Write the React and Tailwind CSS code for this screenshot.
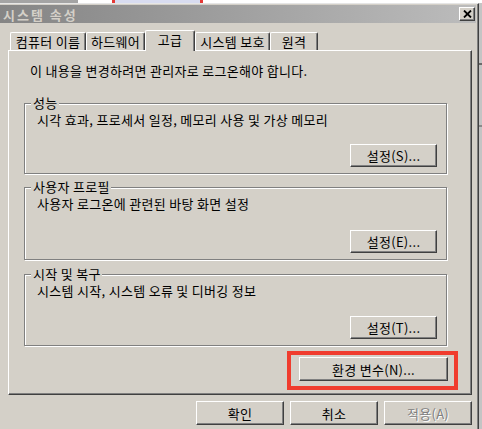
const font = { fontFamily: '"Noto Sans CJK KR", "Liberation Sans", sans-serif' };

const raised =
  "border border-t-white border-l-white border-r-[#404040] border-b-[#404040] shadow-[inset_-1px_-1px_0_#808080] bg-[#d4d0c8]";

function Btn({ label, className, disabled }) {
  return (
    <button
      className={`${raised} flex items-center justify-center text-[13px] leading-none tracking-[0.3px] ${
        disabled ? "text-[#808080] [text-shadow:1px_1px_0_#ffffff]" : "text-black"
      } ${className}`}
    >
      {label}
    </button>
  );
}

function Group({ title, desc, btnLabel, className }) {
  return (
    <div
      className={`relative w-[423px] flex flex-col border border-[#808080] shadow-[inset_1px_1px_0_#ffffff,1px_1px_0_#ffffff] pl-[12px] pr-[9px] pt-[8px] pb-[6px] ${className}`}
    >
      <span className="absolute -top-[9px] left-[6px] bg-[#d4d0c8] pl-[2px] pr-[1px] leading-[16px] text-[13px]">
        {title}
      </span>
      <div className="leading-[16px] text-[13px]">{desc}</div>
      <div className="mt-auto flex justify-end">
        <Btn label={btnLabel} className="w-[87px] h-[23px]" />
      </div>
    </div>
  );
}

function Tab({ label, width, active }) {
  if (active) {
    return (
      <div
        className={`${width} h-[21px] rounded-t-[2px] border-t border-l border-t-white border-l-white border-r border-r-[#404040] shadow-[inset_-1px_0_0_#808080] bg-[#d4d0c8] flex justify-center pt-[1px] text-[13px] leading-[16px]`}
      >
        {label}
      </div>
    );
  }
  return (
    <div
      className={`${width} h-[18px] mb-[1px] rounded-t-[2px] border-t border-l border-t-white border-l-white border-r border-r-[#404040] shadow-[inset_-1px_0_0_#808080] bg-[#d4d0c8] flex justify-center pt-[1px] text-[13px] leading-[16px]`}
    >
      {label}
    </div>
  );
}

export default function App() {
  return (
    <div className="w-[482px] h-[429px] overflow-hidden bg-[#d4d0c8] flex flex-col text-black tracking-[0.3px]" style={font}>
      {/* strip of the window behind */}
      <div className="h-[3px] flex shrink-0">
        <div className="w-[78px] bg-[#a4a4a4]" />
        <div className="w-[34px] bg-white" />
        <div className="w-[3px] bg-[#e53935]" />
        <div className="w-[85px] bg-[#d8dcf0]" />
        <div className="w-[3px] bg-[#e53935]" />
        <div className="flex-1 bg-white" />
      </div>

      <div className="flex flex-1">
        {/* dialog */}
        <div className="w-[479px] flex flex-col border-r border-r-[#404040] shadow-[inset_-1px_0_0_#808080] border-t border-t-[#e6e6e6] pt-[1px]">
          <div className="h-[18px] mr-[2px] flex items-center justify-between pl-[3px] pr-[1px] bg-gradient-to-r from-[#858585] to-[#bcbcbc]">
            <span className="text-[13px] font-bold text-[#d4d0c8] leading-none tracking-[2px]">시스템 속성</span>
            <button className={`${raised} w-[16px] h-[14px] flex items-center justify-center`}>
              <svg width="9" height="8" viewBox="0 0 9 8">
                <path d="M1 0.5 L8 7.5 M8 0.5 L1 7.5" stroke="#000" strokeWidth="1.8" />
              </svg>
            </button>
          </div>

          {/* tabs */}
          <div className="mt-[7px] ml-[10px] h-[21px] -mb-[1px] flex items-end relative z-10">
            <Tab label="컴퓨터 이름" width="w-[76px]" />
            <Tab label="하드웨어" width="w-[59px]" />
            <Tab label="고급" width="w-[50px]" active />
            <Tab label="시스템 보호" width="w-[75px]" />
            <Tab label="원격" width="w-[48px]" />
          </div>

          {/* panel */}
          <div className="ml-[8px] w-[464px] h-[345px] border-t border-l border-t-white border-l-white border-r border-b border-r-[#404040] border-b-[#404040] shadow-[inset_-1px_-1px_0_#808080] flex flex-col pl-[15px] pt-[12px]">
            <div className="ml-[6px] text-[13px] leading-[16px]">
              이 내용을 변경하려면 관리자로 로그온해야 합니다.
            </div>
            <Group
              className="mt-[24px] h-[71px]"
              title="성능"
              desc="시각 효과, 프로세서 일정, 메모리 사용 및 가상 메모리"
              btnLabel="설정(S)..."
            />
            <Group
              className="mt-[13px] h-[73px]"
              title="사용자 프로필"
              desc="사용자 로그온에 관련된 바탕 화면 설정"
              btnLabel="설정(E)..."
            />
            <Group
              className="mt-[14px] h-[72px]"
              title="시작 및 복구"
              desc="시스템 시작, 시스템 오류 및 디버깅 정보"
              btnLabel="설정(T)..."
            />
            <div className="mt-[11px] w-[424px] flex justify-end">
              <div className="relative">
                <Btn label="환경 변수(N)..." className="w-[149px] h-[24px]" />
                <div className="absolute -left-[12px] -right-[10px] -top-[6px] -bottom-[9px] border-4 border-[#f03c2e] pointer-events-none" />
              </div>
            </div>
          </div>

          {/* dialog buttons */}
          <div className="mt-[6px] w-[472px] flex justify-end gap-[6px]">
            <Btn label="확인" className="w-[88px] h-[24px]" />
            <Btn label="취소" className="w-[88px] h-[24px]" />
            <Btn label="적용(A)" className="w-[88px] h-[24px]" disabled />
          </div>
        </div>

        {/* desktop behind */}
        <div className="flex-1 flex flex-col bg-[#c4c4c4]">
          <div className="h-[60px]" />
          <div className="h-[2px] bg-[#6a6a6a]" />
          <div className="h-[60px]" />
          <div className="h-[2px] bg-[#8a8a8a]" />
        </div>
      </div>
    </div>
  );
}
